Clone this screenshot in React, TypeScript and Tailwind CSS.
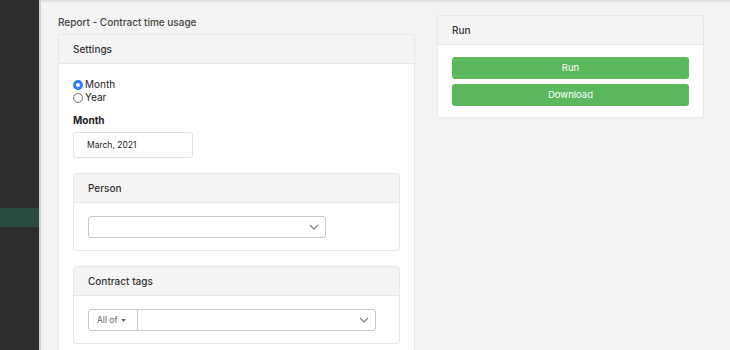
import React from 'react';

function Card({ title, children, className = '' }: { title: string; children: React.ReactNode; className?: string }) {
  return (
    <div className={`bg-white border border-[#e8e8e8] rounded-[3px] ${className}`}>
      <div className="h-[29px] flex items-center px-[14px] bg-[#f5f5f5] border-b border-[#e8e8e8] text-[10px] text-[#333] font-medium">
        {title}
      </div>
      {children}
    </div>
  );
}

function Chevron() {
  return (
    <svg width="10" height="6" viewBox="0 0 10 6" fill="none">
      <path d="M1 1l4 4 4-4" stroke="#8a8a8a" strokeWidth="1.4" />
    </svg>
  );
}

export default function App() {
  return (
    <div className="w-[730px] h-[350px] flex overflow-hidden font-['Inter',sans-serif] text-[#333]">
      {/* sidebar */}
      <div className="w-[41px] shrink-0 bg-[#2d2d2d] flex flex-col border-r-2 border-[#cfd1cf]">
        <div className="h-[208px] shrink-0" />
        <div className="h-[19px] shrink-0 bg-[#2b4a41]" />
      </div>

      {/* main */}
      <div className="flex-1 bg-[#f3f4f3] border-t-2 border-[#dfe3df] pl-[17px] pt-[13px] flex items-start gap-[22px]">
        <div className="w-[357px] shrink-0 flex flex-col">
          <div className="text-[10px] text-[#444] font-medium leading-[12px] mt-[1px] mb-[6px]">Report - Contract time usage</div>
          <Card title="Settings" className="rounded-b-none border-b-0">
            <div className="px-[14px] pt-[14px] pb-[20px]">
              <label className="flex items-center gap-[2px] text-[10px] h-[13px] text-[#222]">
                <span className="w-[10px] h-[10px] rounded-full border-[3px] border-[#2f7cf6] bg-white" />
                Month
              </label>
              <label className="flex items-center gap-[2px] text-[10px] h-[13px] text-[#222]">
                <span className="w-[10px] h-[10px] rounded-full border border-[#777] bg-white" />
                Year
              </label>
              <div className="mt-[10px] text-[10px] font-bold text-[#222] h-[13px] leading-[13px]">Month</div>
              <div className="mt-[5px] w-[120px] h-[26px] border border-[#e2e2e2] rounded-[3px] flex items-center pl-[13px] text-[8.5px] text-[#222]">
                March, 2021
              </div>

              <Card title="Person" className="mt-[15px]">
                <div className="px-[14px] pt-[13px] pb-[12px]">
                  <div className="w-[238px] h-[22px] border border-[#c8c8c8] rounded-[3px] flex items-center justify-end pr-[6px]">
                    <Chevron />
                  </div>
                </div>
              </Card>

              <Card title="Contract tags" className="mt-[15px]">
                <div className="px-[14px] pt-[13px] pb-[12px]">
                  <div className="w-[288px] h-[22px] border border-[#c8c8c8] rounded-[3px] flex">
                    <div className="w-[49px] border-r border-[#c8c8c8] flex items-center pl-[8px] gap-[3px] text-[8.5px] text-[#666]">
                      All of
                      <svg width="5" height="3" viewBox="0 0 5 3"><path d="M0 0h5L2.5 3z" fill="#666" /></svg>
                    </div>
                    <div className="flex-1 flex items-center justify-end pr-[6px]">
                      <Chevron />
                    </div>
                  </div>
                </div>
              </Card>
            </div>
          </Card>
        </div>

        <div className="w-[267px] shrink-0">
          <Card title="Run">
            <div className="px-[14px] pt-[12px] pb-[11px] flex flex-col gap-[5px]">
              <button className="h-[22px] w-[237px] rounded-[3px] bg-[#5cb85c] text-white text-[9.5px]">Run</button>
              <button className="h-[22px] w-[237px] rounded-[3px] bg-[#5cb85c] text-white text-[9.5px]">Download</button>
            </div>
          </Card>
        </div>
      </div>
    </div>
  );
}
